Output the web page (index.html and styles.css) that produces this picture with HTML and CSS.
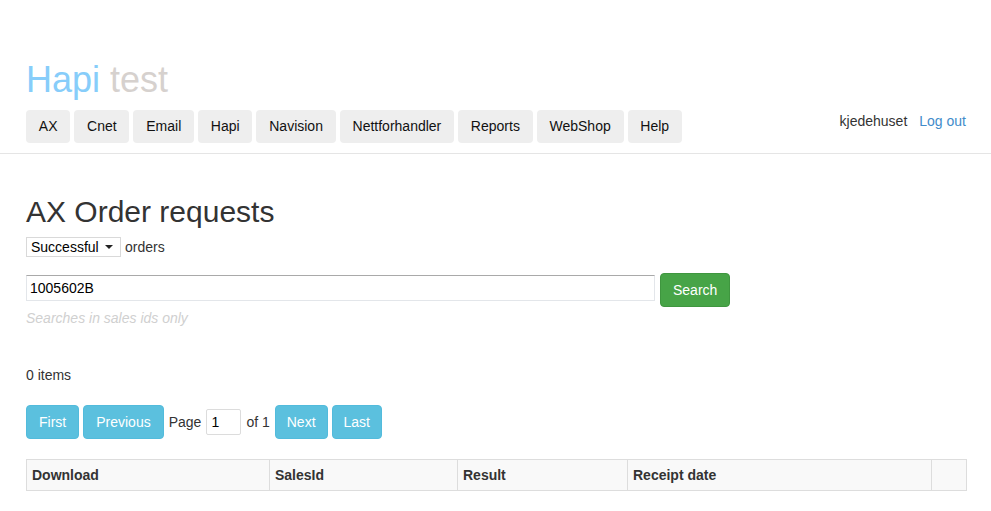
FILE: index.html
```html
<!DOCTYPE html>
<html lang="en">
<head>
<meta charset="utf-8">
<title>AX Order requests</title>
<link rel="stylesheet" href="styles.css">
</head>
<body>
<header class="site-header">
  <h1 class="brand"><span class="brand-main">Hapi</span> <span class="brand-env">test</span></h1>
  <div class="header-row">
    <nav class="nav">
      <a class="pill" href="#">AX</a>
      <a class="pill" href="#">Cnet</a>
      <a class="pill" href="#">Email</a>
      <a class="pill" href="#">Hapi</a>
      <a class="pill" href="#">Navision</a>
      <a class="pill" href="#">Nettforhandler</a>
      <a class="pill" href="#">Reports</a>
      <a class="pill" href="#">WebShop</a>
      <a class="pill" href="#">Help</a>
    </nav>
    <div class="user">
      <span class="user-name">kjedehuset</span>
      <a class="logout" href="#">Log out</a>
    </div>
  </div>
</header>
<main class="main">
  <h2 class="page-title">AX Order requests</h2>
  <div class="filter-row">
    <span class="select-wrap">
      <select class="status-select">
        <option>Successful</option>
        <option>Failed</option>
      </select>
    </span>
    <span>orders</span>
  </div>
  <div class="search-row">
    <input class="search-input" type="text" value="1005602B">
    <button class="btn btn-success" type="button">Search</button>
  </div>
  <p class="help">Searches in sales ids only</p>
  <p class="count">0 items</p>
  <div class="pager">
    <button class="btn btn-info" type="button">First</button>
    <button class="btn btn-info" type="button">Previous</button>
    <span class="pager-text">Page</span>
    <input class="page-input" type="text" value="1">
    <span class="pager-text">of 1</span>
    <button class="btn btn-info btn-tight" type="button">Next</button>
    <button class="btn btn-info btn-tight" type="button">Last</button>
  </div>
  <table class="grid">
    <thead>
      <tr>
        <th class="col-download">Download</th>
        <th class="col-sales">SalesId</th>
        <th class="col-result">Result</th>
        <th class="col-date">Receipt date</th>
        <th class="col-extra"></th>
      </tr>
    </thead>
  </table>
</main>
</body>
</html>
```
FILE: styles.css
```css
* { box-sizing: border-box; }
html, body { margin: 0; padding: 0; }
body {
  font-family: "Liberation Sans", Arial, sans-serif;
  font-size: 14px;
  line-height: 20px;
  color: #333;
  background: #fff;
}
.site-header {
  padding: 60px 25px 10px 26px;
  border-bottom: 1px solid #e5e5e5;
}
.brand {
  margin: 0 0 10px 0;
  font-size: 36px;
  font-weight: normal;
  line-height: 40px;
}
.brand-main { color: #87cdfa; }
.brand-env { color: #d6d1ce; }
.header-row {
  display: flex;
  justify-content: space-between;
  align-items: flex-start;
}
.nav { display: flex; gap: 4px; }
.pill {
  display: block;
  padding: 6px 12.8px;
  line-height: 21px;
  background: #eee;
  border-radius: 4px;
  color: #111;
  text-decoration: none;
}
.user {
  display: flex;
  gap: 12px;
  padding-top: 1px;
}
.user-name { color: #333; }
.logout { color: #428bca; text-decoration: none; }

.main { padding: 41px 25px 0 26px; }
.page-title {
  margin: 0 0 9px 0;
  font-size: 30px;
  font-weight: normal;
  line-height: 33px;
  color: #333;
}
.filter-row {
  display: flex;
  align-items: center;
  gap: 4px;
  height: 20px;
}
.select-wrap {
  position: relative;
  display: block;
  width: 95px;
  height: 20px;
}
.select-wrap::after {
  content: "";
  position: absolute;
  right: 8px;
  top: 8px;
  border-left: 4px solid transparent;
  border-right: 4px solid transparent;
  border-top: 4px solid #222;
  pointer-events: none;
}
.status-select {
  appearance: none;
  -webkit-appearance: none;
  display: block;
  width: 95px;
  height: 20px;
  margin: 0;
  padding: 0 18px 0 4px;
  border: 1px solid #d9d9d9;
  border-radius: 0;
  background: #fff;
  font-family: "Liberation Sans", Arial, sans-serif;
  font-size: 14px;
  line-height: 18px;
  color: #000;
}
.search-row {
  display: flex;
  align-items: flex-start;
  gap: 5px;
  margin-top: 16px;
}
.search-input {
  width: 629px;
  height: 26px;
  margin: 2px 0 0 0;
  padding: 0 3px;
  border: 1px solid #e3e6ea;
  border-top-color: #a9a9a9;
  font-family: "Liberation Sans", Arial, sans-serif;
  font-size: 14px;
  color: #000;
  outline: none;
}
.btn {
  display: inline-block;
  margin: 0;
  padding: 6px 12px;
  border: 1px solid transparent;
  border-radius: 4px;
  font-family: "Liberation Sans", Arial, sans-serif;
  font-size: 14px;
  line-height: 20px;
  color: #fff;
  cursor: pointer;
}
.btn-tight { padding: 6px 11px; }
.btn-success { background: #47a447; border-color: #3f963f; }
.btn-info { background: #5bc0de; border-color: #52bbdc; }
.help {
  margin: 1px 0 0 0;
  color: #d0d0d0;
  font-style: italic;
}
.count { margin: 37px 0 0 0; }
.pager {
  display: flex;
  align-items: center;
  gap: 4px;
  margin-top: 20px;
}
.pager-text { color: #333; padding: 0 1px; }
.page-input {
  width: 35px;
  height: 26px;
  margin: 0;
  padding: 0 4px;
  border: 1px solid #dcdcdc;
  border-radius: 2px;
  font-family: "Liberation Sans", Arial, sans-serif;
  font-size: 14px;
  color: #000;
  outline: none;
}
.grid {
  width: 940px;
  margin-top: 20px;
  border-collapse: collapse;
  table-layout: fixed;
}
.grid th {
  padding: 5px;
  border: 1px solid #ddd;
  background: #f9f9f9;
  text-align: left;
  font-weight: bold;
  line-height: 20px;
  color: #333;
}
.col-download { width: 243px; }
.col-sales { width: 188px; }
.col-result { width: 170px; }
.col-date { width: 304px; }
.col-extra { width: 35px; }
```
